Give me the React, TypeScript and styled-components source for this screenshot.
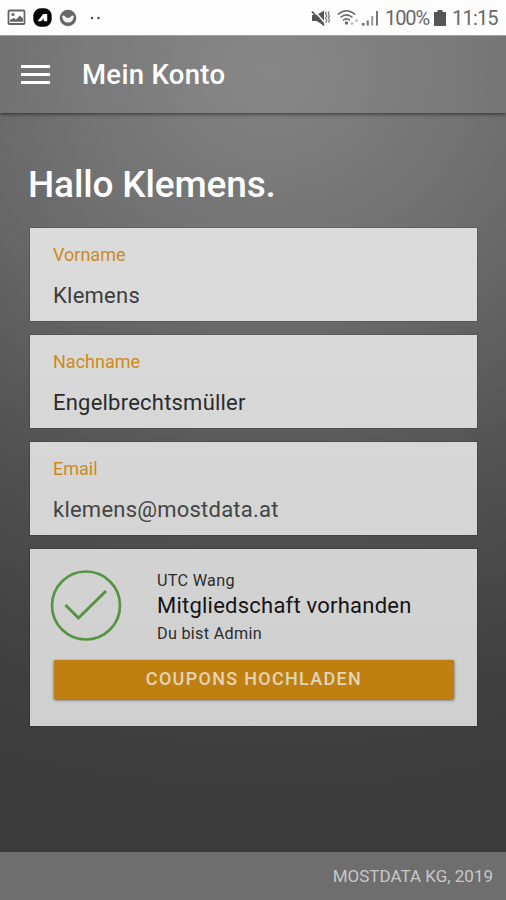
import React from "react";
import styled, { createGlobalStyle } from "styled-components";

const GlobalStyle = createGlobalStyle`
  * { box-sizing: border-box; }
  body { margin: 0; font-family: Roboto, "Liberation Sans", sans-serif; }
`;

const Screen = styled.div`
  display: flex;
  flex-direction: column;
  width: 506px;
  height: 900px;
  overflow: hidden;
  background: radial-gradient(ellipse 840px 740px at 270px 70px, #828282 0%, #7e7e7e 8%, #747474 22%, #6a6a6a 34%, #525252 59%, #424242 82%, #3b3b3b 100%);
`;

const StatusBar = styled.div`
  flex: none;
  position: relative;
  z-index: 1;
  display: flex;
  align-items: center;
  justify-content: space-between;
  height: 35px;
  padding: 0 8px 0 7px;
  background: #fdfdfd;
  color: #686868;
`;

const StatusGroup = styled.div<{ $gap: number }>`
  display: flex;
  align-items: center;
  gap: ${(p) => p.$gap}px;
  svg { display: block; flex: none; }
`;

const StatusText = styled.span<{ $width: number; $spacing: number }>`
  width: ${(p) => p.$width}px;
  font-size: 20px;
  line-height: 24px;
  letter-spacing: ${(p) => p.$spacing}px;
  white-space: nowrap;
  padding-top: 1px;
`;

const Dots = styled.svg`
  margin-left: 6px;
`;

const Header = styled.header`
  flex: none;
  display: flex;
  align-items: center;
  gap: 32px;
  height: 78px;
  padding: 0 21px;
  background: rgba(255, 255, 255, 0.045);
  border-top: 1px solid #a3a3a3;
  box-shadow: 0 1px 4px rgba(0, 0, 0, 0.6);
`;

const MenuButton = styled.button`
  display: flex;
  flex-direction: column;
  justify-content: space-between;
  width: 29px;
  height: 19px;
  margin-top: -1px;
  padding: 0;
  border: 0;
  background: none;
`;

const MenuLine = styled.span`
  height: 3px;
  background: #fff;
`;

const Title = styled.h1`
  margin: 0;
  color: #fff;
  font-size: 27.5px;
  font-weight: 500;
  line-height: 34px;
  letter-spacing: 0.3px;
`;

const Content = styled.main`
  flex: 1;
  display: flex;
  flex-direction: column;
  padding: 49px 29px 0 30px;
`;

const Greeting = styled.h2`
  margin: 0 0 21px -2px;
  color: #fff;
  font-size: 37px;
  font-weight: 500;
  line-height: 45px;
  letter-spacing: -0.15px;
  white-space: nowrap;
`;

const Cards = styled.div`
  display: flex;
  flex-direction: column;
  gap: 14px;
`;

const Card = styled.section<{ $tone: string }>`
  background: ${(p) => p.$tone};
  outline: 1px solid rgba(0, 0, 0, 0.13);
`;

const Field = styled(Card)`
  height: 93px;
  padding: 16px 23px 0;
`;

const Label = styled.div`
  color: #cc8a1c;
  font-size: 18px;
  line-height: 22px;
`;

const Value = styled.div<{ $spacing: number; $color: string }>`
  margin-top: 16px;
  color: ${(p) => p.$color};
  font-size: 22px;
  line-height: 27px;
  letter-spacing: ${(p) => p.$spacing}px;
`;

const Membership = styled(Card)`
  height: 177px;
  padding: 21px 24px 0 20px;
`;

const MembershipInfo = styled.div`
  display: flex;
  gap: 35px;
  height: 90px;
  svg { flex: none; }
`;

const MembershipText = styled.div`
  display: flex;
  flex-direction: column;
  white-space: nowrap;
`;

const Small = styled.span`
  color: #2c2c2c;
  font-size: 16.2px;
  line-height: 22px;
  letter-spacing: 0.3px;
`;

const Strong = styled.span`
  margin: 0 0 3px;
  color: #141414;
  font-size: 22px;
  line-height: 28px;
  letter-spacing: 0.23px;
`;

const UploadButton = styled.button`
  display: block;
  width: 400px;
  height: 39px;
  margin-left: 4px;
  padding: 0 0 2px;
  border: 0;
  border-radius: 1px;
  background: #c0800f;
  box-shadow: 0 1px 3px rgba(0, 0, 0, 0.6);
  color: #e0d4bc;
  font-family: inherit;
  font-size: 18px;
  font-weight: 500;
  letter-spacing: 1.3px;
`;

const Footer = styled.footer`
  flex: none;
  display: flex;
  align-items: center;
  justify-content: flex-end;
  height: 48px;
  padding: 0 13px;
  background: #6e6e6e;
  color: #c8c8c8;
  font-size: 17px;
`;

const PictureIcon = () => (
  <svg width="19" height="17" viewBox="0 0 19 17">
    <rect x="1.5" y="1.5" width="16" height="13.5" rx="1" fill="none" stroke="#666" strokeWidth="1.8" />
    <circle cx="6" cy="5.5" r="1.6" fill="#666" />
    <path d="M3 12.8V11l3.5-2 2.5 1.5 4-4 3 3v3.3z" fill="#666" />
  </svg>
);

const AppBadgeIcon = () => (
  <svg width="19" height="19" viewBox="0 0 19 19">
    <rect x=".3" y=".3" width="18.4" height="18.4" rx="7.5" fill="#060606" />
    <path d="M4.5 13.2 10.2 6h4v7.2h-3.4v-2.6L8 13.2z" fill="#fff" />
  </svg>
);

const SmileIcon = () => (
  <svg width="18" height="18" viewBox="0 0 18 18">
    <circle cx="9" cy="9" r="8.3" fill="#676767" />
    <path d="M3.2 7.2Q4.500 5.500 6.200 7.500Q9 10.500 11.800 7.500Q13.500 5.500 14.800 7.200Q14.200 13.500 9 13.500Q3.800 13.500 3.200 7.200z" fill="#f2f2f2" />
  </svg>
);

const DotsIcon = () => (
  <Dots width="12" height="4" viewBox="0 0 12 4">
    <circle cx="2" cy="2" r="1.2" fill="#444" />
    <circle cx="8.5" cy="2" r="1.2" fill="#444" />
  </Dots>
);

const MuteIcon = () => (
  <svg width="20" height="18" viewBox="0 0 20 18">
    <path d="M1 6h4.5L13 1.5v15L5.5 12H1z" fill="#555" />
    <path d="M3 1.2 14 14" stroke="#fdfdfd" strokeWidth="1.4" />
    <path d="M1 2.5 13 16.5" stroke="#555" strokeWidth="1.8" />
    <path d="M15.3 2.5l-.8 2.2 1.3 2.2-1.3 2.2 1.3 2.2-1 2.5M18 2.5l-.8 2.2 1.3 2.2-1.3 2.2 1.3 2.2-1 2.5" fill="none" stroke="#777" strokeWidth="1.2" />
  </svg>
);

const WifiIcon = () => (
  <svg width="23" height="18" viewBox="0 0 23 18">
    <g fill="none" stroke="#6a6a6a" strokeWidth="1.6">
      <path d="M.8 5.5Q9.5-2 18.200 5.500" />
      <path d="M3.5 8.5Q9.5 3.2 15.500 8.500" />
      <path d="M6 11.5Q9.5 8.2 13 11.500" />
    </g>
    <circle cx="9.5" cy="14" r="1.7" fill="#666" />
    <path d="M13 13.5h4L15 16.500zM17.500 12.500h4L19.500 9.500z" fill="#bbb" />
  </svg>
);

const SignalIcon = () => (
  <svg width="17" height="18" viewBox="0 0 17 18">
    <path d="M0 14h2.5v2.5H0z" fill="#666" />
    <path d="M4.6 11.5h2.2v5H4.6z" fill="#777" />
    <path d="M9.2 7h2v9.5h-2z" fill="#999" />
    <path d="M14 2h2v14.5h-2z" fill="#777" />
  </svg>
);

const BatteryIcon = () => (
  <svg width="12" height="18" viewBox="0 0 12 18">
    <path d="M3.5 1h5v2H12v14H0V3h3.500z" fill="#555" />
  </svg>
);

const CheckIcon = () => (
  <svg width="72" height="72" viewBox="0 0 72 72" fill="none" stroke="#569442" strokeWidth="2.7">
    <circle cx="36" cy="35.5" r="34" />
    <path d="M15.5 35 28.5 48 56 21" strokeWidth="3" />
  </svg>
);

const fields = [
  { label: "Vorname", value: "Klemens", tone: "linear-gradient(#dbdbdb, #dadada)", spacing: 0.25, color: "#3d3d3d" },
  { label: "Nachname", value: "Engelbrechtsmüller", tone: "linear-gradient(#d9d9d9, #d7d7d7)", spacing: 0.22, color: "#2b2b2b" },
  { label: "Email", value: "klemens@mostdata.at", tone: "linear-gradient(#d7d7d7, #d4d4d4)", spacing: 0.23, color: "#444" },
];

export default function App() {
  return (
    <>
      <GlobalStyle />
      <Screen>
        <StatusBar>
          <StatusGroup $gap={7}>
            <PictureIcon />
            <AppBadgeIcon />
            <SmileIcon />
            <DotsIcon />
          </StatusGroup>
          <StatusGroup $gap={6}>
            <MuteIcon />
            <StatusGroup $gap={2}>
              <WifiIcon />
              <SignalIcon />
            </StatusGroup>
            <StatusText $width={43} $spacing={-1.1}>100%</StatusText>
            <BatteryIcon />
            <StatusText $width={46} $spacing={-0.8}>11:15</StatusText>
          </StatusGroup>
        </StatusBar>
        <Header>
          <MenuButton aria-label="Menü">
            <MenuLine />
            <MenuLine />
            <MenuLine />
          </MenuButton>
          <Title>Mein Konto</Title>
        </Header>
        <Content>
          <Greeting>Hallo Klemens.</Greeting>
          <Cards>
            {fields.map((f) => (
              <Field key={f.label} $tone={f.tone}>
                <Label>{f.label}</Label>
                <Value $spacing={f.spacing} $color={f.color}>{f.value}</Value>
              </Field>
            ))}
            <Membership $tone="linear-gradient(#d3d3d3, #cfcfcf)">
              <MembershipInfo>
                <CheckIcon />
                <MembershipText>
                  <Small>UTC Wang</Small>
                  <Strong>Mitgliedschaft vorhanden</Strong>
                  <Small>Du bist Admin</Small>
                </MembershipText>
              </MembershipInfo>
              <UploadButton>COUPONS HOCHLADEN</UploadButton>
            </Membership>
          </Cards>
        </Content>
        <Footer>MOSTDATA KG, 2019</Footer>
      </Screen>
    </>
  );
}
